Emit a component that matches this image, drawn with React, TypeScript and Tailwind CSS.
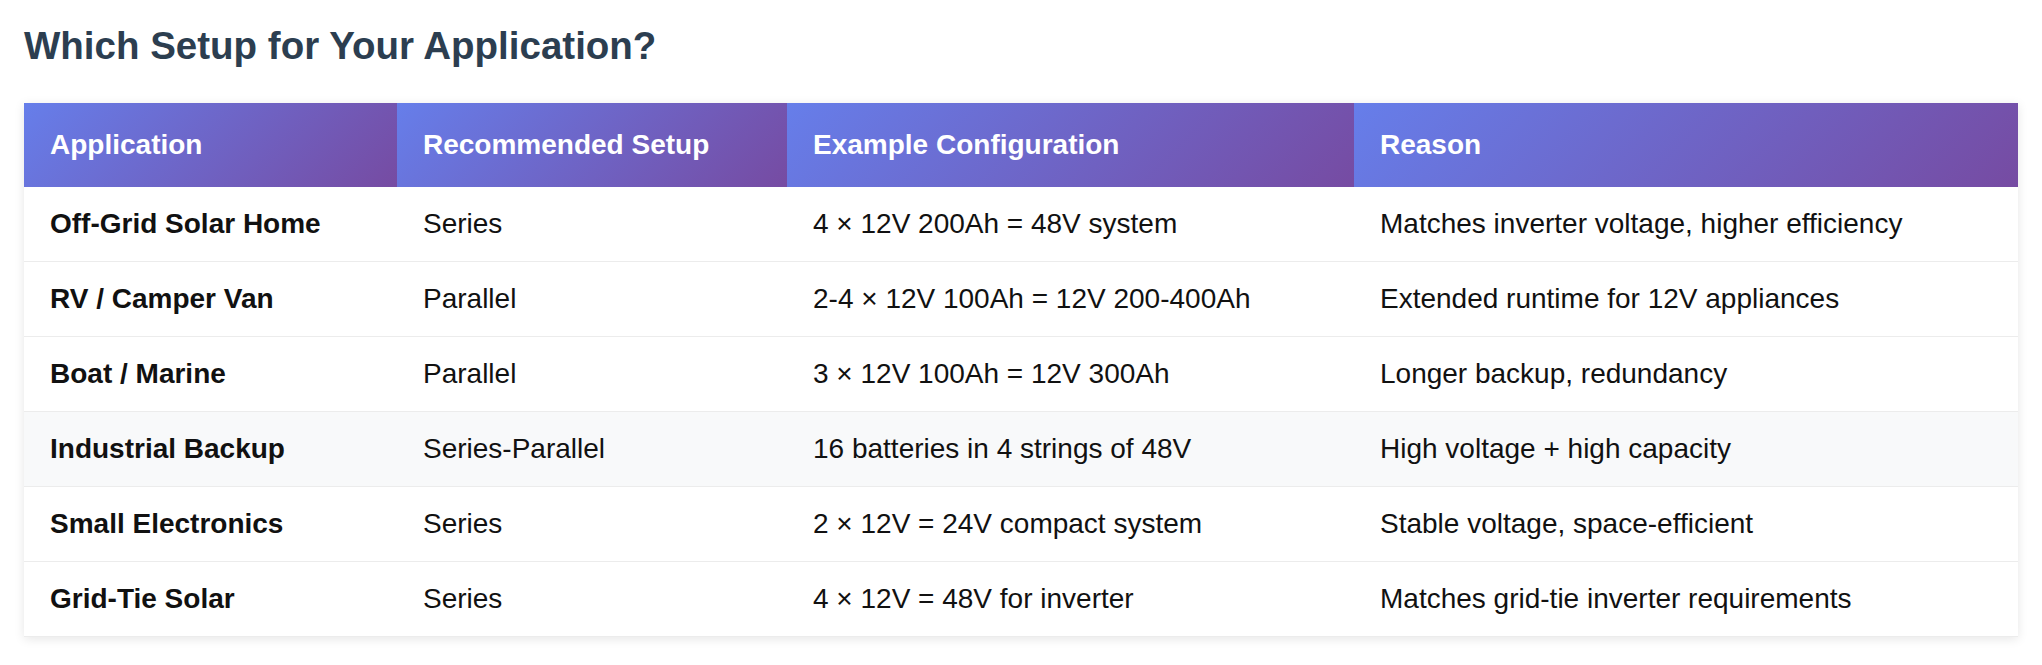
const rows = [
  {
    app: 'Off-Grid Solar Home',
    setup: 'Series',
    config: '4 × 12V 200Ah = 48V system',
    reason: 'Matches inverter voltage, higher efficiency',
  },
  {
    app: 'RV / Camper Van',
    setup: 'Parallel',
    config: '2-4 × 12V 100Ah = 12V 200-400Ah',
    reason: 'Extended runtime for 12V appliances',
  },
  {
    app: 'Boat / Marine',
    setup: 'Parallel',
    config: '3 × 12V 100Ah = 12V 300Ah',
    reason: 'Longer backup, redundancy',
  },
  {
    app: 'Industrial Backup',
    setup: 'Series-Parallel',
    config: '16 batteries in 4 strings of 48V',
    reason: 'High voltage + high capacity',
    highlight: true,
  },
  {
    app: 'Small Electronics',
    setup: 'Series',
    config: '2 × 12V = 24V compact system',
    reason: 'Stable voltage, space-efficient',
  },
  {
    app: 'Grid-Tie Solar',
    setup: 'Series',
    config: '4 × 12V = 48V for inverter',
    reason: 'Matches grid-tie inverter requirements',
  },
];

const headers = [
  { label: 'Application', width: 'w-[373px]' },
  { label: 'Recommended Setup', width: 'w-[390px]' },
  { label: 'Example Configuration', width: 'w-[567px]' },
  { label: 'Reason', width: 'w-auto' },
];

const App = () => {
  return (
    <div className="min-h-[665px] bg-white px-[24px] pt-[24px] pb-[28px] font-['Liberation_Sans',Arial,sans-serif]">
      <h2 className="text-[38.5px] leading-[44px] font-bold text-[#2c3e50]">
        Which Setup for Your Application?
      </h2>

      {/* Setup table */}
      <table className="mt-[35px] w-full table-fixed border-collapse bg-white shadow-[0_2px_10px_rgba(0,0,0,0.1)]">
        <thead>
          <tr>
            {headers.map((h) => (
              <th
                key={h.label}
                className={`${h.width} bg-[linear-gradient(135deg,#667eea_0%,#764ba2_100%)] px-[26px] py-[26px] text-left text-[28px] leading-[32px] font-bold text-white`}
              >
                {h.label}
              </th>
            ))}
          </tr>
        </thead>
        <tbody>
          {rows.map((row) => (
            <tr
              key={row.app}
              className={`border-b border-[#ececec] ${row.highlight ? 'bg-[#f8f9fa]' : 'bg-white'}`}
            >
              <td className="px-[26px] py-[21px] text-[28px] leading-[32px] font-bold text-[#111]">
                {row.app}
              </td>
              <td className="px-[26px] py-[21px] text-[28px] leading-[32px] text-[#111]">
                {row.setup}
              </td>
              <td className="px-[26px] py-[21px] text-[28px] leading-[32px] text-[#111]">
                {row.config}
              </td>
              <td className="px-[26px] py-[21px] text-[28px] leading-[32px] text-[#111]">
                {row.reason}
              </td>
            </tr>
          ))}
        </tbody>
      </table>
    </div>
  );
};

export default App;
